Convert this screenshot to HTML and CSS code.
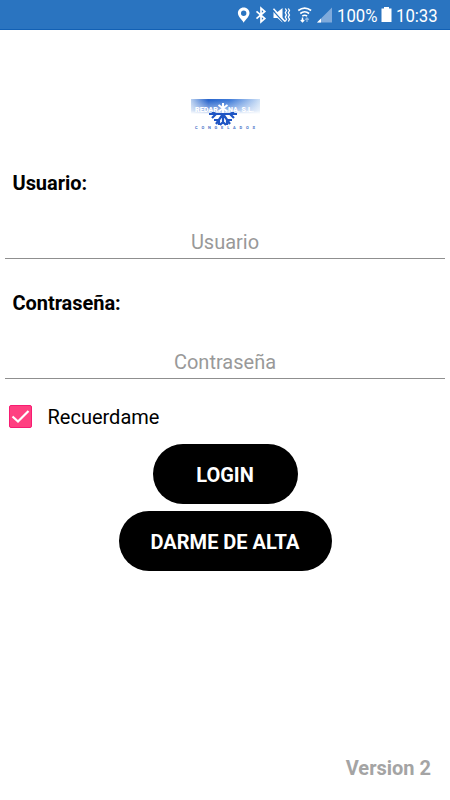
FILE: index.html
```html
<!DOCTYPE html>
<html lang="es">
  <head>
    <meta charset="UTF-8" />
    <meta name="viewport" content="width=device-width, initial-scale=1.0" />
    <title>Login</title>
    <link rel="stylesheet" href="styles.css">
  </head>
  <body>
    <header class="status-bar">
      <!-- location, bluetooth, muted, wifi, signal -->
      <svg class="status-icons" width="96" height="20" viewBox="237 5 96 20" fill="none" stroke="#fff">
        <path fill="#fff" stroke="none" fill-rule="evenodd" d="M243.7 7.500c-3.400 0-5.800 2.500-5.800 5.600 0 3.700 3.800 6.200 5.800 9.600 2-3.400 5.800-5.900 5.800-9.600 0-3.100-2.400-5.600-5.800-5.600zm0 3a2.700 2.700 0 1 1 0 5.400 2.700 2.700 0 0 1 0-5.400z"/>
        <path stroke-width="1.700" d="M256.500 11.300l8.300 7.200-3.800 3.300V8.200l3.800 3.300-8.300 7.200"/>
        <path fill="#fff" stroke="none" d="M273.500 12h4l5-4v14.500l-5-4.500h-4z"/>
        <path stroke="#2a74c0" stroke-width="1.200" d="M273 10.500l10.500 11.500"/>
        <path stroke-width="1.500" d="M273.500 8.700l11.500 12.800"/>
        <path stroke-width="1.300" d="M285.300 8.500l1.200 2-1.200 2.200 1.200 2.200-1.200 2.200 1.200 2.200-1.200 2.200M288.300 8.500l1.200 2-1.200 2.200 1.200 2.200-1.200 2.200 1.200 2.200-1.200 2.200"/>
        <path stroke-width="1.600" d="M298.300 10.500q6.400-4.800 12.800 0M300.300 13.500q4.400-3.400 8.800 0M302.300 16.200q2.400-1.800 4.800 0"/>
        <path stroke-width="1.400" d="M302.500 17.500v4M300.800 20l1.700 1.700 1.700-1.700"/>
        <path stroke="#8db6e0" stroke-width="1.400" d="M307 22v-4M305.300 19.700l1.700-1.700 1.700 1.700"/>
        <path fill="#7faadb" stroke="none" d="M332 7.500v15h-15z"/>
        <path fill="#fff" stroke="none" d="M321 18.500v4h-4z"/>
      </svg>
      <span class="battery-level">100%</span>
      <svg class="battery" width="11" height="15" viewBox="0 0 11 15">
        <path fill="#fff" d="M3 0h5v1.500h2.500V15H.5V1.500H3z"/>
      </svg>
      <span class="clock">10:33</span>
    </header>

    <main class="login">
      <svg class="logo" width="70" height="34" viewBox="0 0 70 34">
        <defs>
          <linearGradient id="sky" x1="0" x2="1">
            <stop offset="0" stop-color="#b9d0f0"/>
            <stop offset=".25" stop-color="#2a66cc"/>
            <stop offset=".55" stop-color="#3f7bd8"/>
            <stop offset="1" stop-color="#d0e2f7"/>
          </linearGradient>
          <linearGradient id="fade" x1="0" x2="0" y1="0" y2="1">
            <stop offset=".1" stop-color="#fff" stop-opacity="0"/>
            <stop offset=".75" stop-color="#fff" stop-opacity=".5"/>
            <stop offset="1" stop-color="#fff"/>
          </linearGradient>
        </defs>
        <rect x="1" y="1" width="69" height="15" fill="url(#sky)"/>
        <rect x="1" y="1" width="69" height="15" fill="url(#fade)"/>
        <path fill="none" stroke="#1f55c4" stroke-width="2.200" d="M33 14v12M33 16H19M33 16h14M33 16l-7 10M33 16l7 10M22 14l4 2-4 4M44 14l-4 2 4 4M24 22h5v5M42 22h-5v5M30 27l3-3 3 3"/>
        <path stroke="#fff" stroke-width="2" d="M33 5v10M28.500 7l9 6.500M37.500 7l-9 6.500"/>
        <text class="logo-name" x="5" y="14" textLength="23" lengthAdjust="spacingAndGlyphs">REDAR</text>
        <text class="logo-name" x="38" y="14" textLength="26" lengthAdjust="spacingAndGlyphs">NA, S.L.</text>
        <text class="logo-tag" x="5" y="31" textLength="60">CONGELADOS</text>
      </svg>

      <form class="login-form">
        <label class="label" for="user">Usuario:</label>
        <input class="field" id="user" type="text" placeholder="Usuario">

        <label class="label" for="pass">Contraseña:</label>
        <input class="field" id="pass" type="password" placeholder="Contraseña">

        <div class="remember">
          <svg width="23" height="23" viewBox="0 0 23 23">
            <rect x=".5" y=".5" width="22" height="22" rx="1.500" fill="#ff4081" stroke="#f71c72"/>
            <path d="M3.500 11.500l5.500 5L19.500 6" fill="none" stroke="#fff" stroke-width="2.200"/>
          </svg>
          <span>Recuerdame</span>
        </div>

        <button class="button login-button" type="button">LOGIN</button>
        <button class="button signup-button" type="button">DARME DE ALTA</button>
      </form>
    </main>

    <footer class="version">Version 2</footer>
  </body>
</html>
```

FILE: styles.css
```css
* {
  box-sizing: border-box;
}
body {
  display: flex;
  flex-direction: column;
  height: 100vh;
  margin: 0;
  background: #fff;
  color: #000;
  font-family: Roboto, sans-serif;
  font-size: 20px;
}
.status-bar {
  display: flex;
  align-items: center;
  height: 30px;
  padding-left: 237px;
  background: #2a74c0;
  border-bottom: 1px solid #1260b4;
  color: #fff;
  font-size: 19px;
}
.status-icons {
  flex: none;
}
.battery-level,
.clock {
  flex: none;
  width: 40px;
  margin-left: 4px;
  padding-top: 1px;
  white-space: nowrap;
  transform: scaleX(0.88);
  transform-origin: left;
}
.battery {
  flex: none;
  margin-left: 4px;
}
.clock {
  margin-left: 4px;
}
.login {
  flex: 1;
}
.logo {
  display: block;
  margin: 68px 0 0 190px;
}
.logo-name {
  fill: #fff;
  font-size: 8px;
  font-weight: 900;
}
.logo-tag {
  fill: #4a73c8;
  font-size: 4px;
  font-weight: bold;
}
.login-form {
  display: flex;
  flex-direction: column;
  align-items: center;
  padding: 0 5px;
}
.label {
  align-self: stretch;
  height: 24px;
  margin-top: 39px;
  padding-left: 7.5px;
  font-weight: bold;
  letter-spacing: -0.05px;
  line-height: 24px;
}
.label + .field {
  margin-top: 33px;
}
.field {
  width: 100%;
  height: 31px;
  padding: 0 0 2px;
  border: 0;
  border-bottom: 1px solid #8f8f8f;
  background: none;
  font: inherit;
  text-align: center;
}
.field::placeholder {
  color: #999;
}
.field + .label {
  margin-top: 32px;
}
.remember {
  display: flex;
  align-items: center;
  align-self: stretch;
  gap: 16px;
  height: 24px;
  margin: 25px 0 16px;
  padding-left: 3.5px;
}
.remember span {
  padding-top: 2px;
}
.button {
  height: 60px;
  padding: 2px 0 0;
  border: 0;
  border-radius: 30px;
  background: #000;
  color: #fff;
  font: bold 20px Roboto, sans-serif;
}
.login-button {
  width: 145px;
}
.signup-button {
  width: 213px;
  margin-top: 7px;
}
.version {
  padding: 0 19px 20px 0;
  color: #a4a4a4;
  font-weight: bold;
  line-height: 24px;
  text-align: right;
}
```
